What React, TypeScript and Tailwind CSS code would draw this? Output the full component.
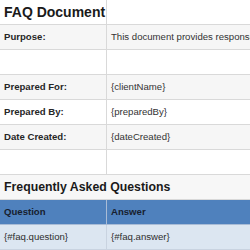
import React from 'react';

type Row = {
  label?: string;
  value?: string;
  kind?: 'title' | 'field' | 'blank' | 'section' | 'head' | 'item';
};

const rows: Row[] = [
  { kind: 'title', label: 'FAQ Document' },
  { kind: 'field', label: 'Purpose:', value: 'This document provides responses to frequently asked questions.' },
  { kind: 'blank' },
  { kind: 'field', label: 'Prepared For:', value: '{clientName}' },
  { kind: 'field', label: 'Prepared By:', value: '{preparedBy}' },
  { kind: 'field', label: 'Date Created:', value: '{dateCreated}' },
  { kind: 'blank' },
  { kind: 'section', label: 'Frequently Asked Questions' },
  { kind: 'head', label: 'Question', value: 'Answer' },
  { kind: 'item', label: '{#faq.question}', value: '{#faq.answer}' },
];

function SheetRow({ row, index }: { row: Row; index: number }) {
  const striped = index % 2 === 1;

  if (row.kind === 'title' || row.kind === 'section') {
    return (
      <div className={`flex h-[25px] border-b border-[#d9d9d9] ${striped ? 'bg-[#f7f7f7]' : 'bg-white'}`}>
        <div
          className={`flex items-center px-1 whitespace-nowrap font-bold text-[#1a1a1a] ${
            row.kind === 'title' ? 'w-[107px] border-r border-[#d9d9d9] text-[14px]' : 'flex-1 text-[12.3px]'
          }`}
        >
          {row.label}
        </div>
        {row.kind === 'title' && <div className="flex-1" />}
      </div>
    );
  }

  if (row.kind === 'head') {
    return (
      <div className="flex h-[25px] border-b border-[#a9bcd6] bg-[#4f81bd] text-[9.6px] font-bold text-[#17202e]">
        <div className="flex w-[107px] items-center border-r border-[#a9bcd6] px-1">{row.label}</div>
        <div className="flex flex-1 items-center px-1">{row.value}</div>
      </div>
    );
  }

  if (row.kind === 'item') {
    return (
      <div className="flex h-[25px] border-b border-[#c9d3e0] bg-[#dce6f1] text-[9.6px] text-[#2e2e2e]">
        <div className="flex w-[107px] items-center border-r border-[#c9d3e0] px-1">{row.label}</div>
        <div className="flex flex-1 items-center px-1">{row.value}</div>
      </div>
    );
  }

  return (
    <div className={`flex h-[25px] border-b border-[#d9d9d9] ${striped ? 'bg-[#f6f6f6]' : 'bg-white'}`}>
      <div className="flex w-[107px] items-center border-r border-[#d9d9d9] px-1 text-[9.6px] font-bold text-[#262626]">
        {row.label}
      </div>
      <div className="flex flex-1 items-center whitespace-nowrap px-1 text-[9.6px] text-[#333]">
        {row.value}
      </div>
    </div>
  );
}

export default function App() {
  return (
    <div className="h-[250px] w-[250px] overflow-hidden bg-white font-['Liberation_Sans',Arial,sans-serif]">
      <div className="w-[420px]">
        {rows.map((row, i) => (
          <SheetRow key={i} row={row} index={i} />
        ))}
      </div>
    </div>
  );
}
